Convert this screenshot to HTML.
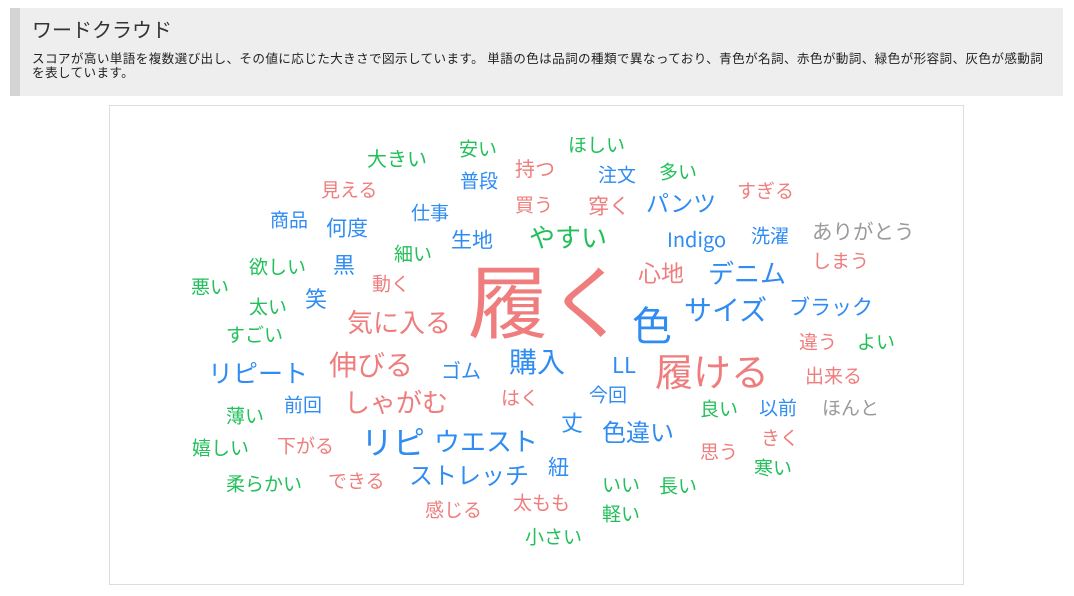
<!DOCTYPE html>
<html><head><meta charset="utf-8"><style>
body{margin:0;width:1074px;height:596px;background:#fff;font-family:"Liberation Sans","Noto Sans CJK JP",sans-serif;position:relative;overflow:hidden}
.hd{position:absolute;left:10px;top:8px;width:1053px;height:88px;background:#eee;border-left:10px solid #d4d4d4;box-sizing:border-box}
.hd h1{position:absolute;left:12px;top:9px;margin:0;font-weight:normal;font-size:20px;color:#333;line-height:24px;font-family:"Noto Sans CJK JP",sans-serif}
.hd p{position:absolute;left:12px;top:43px;margin:0;width:1030px;font-size:12.6px;line-height:14px;color:#222;font-family:"Noto Sans CJK JP",sans-serif;white-space:nowrap;letter-spacing:0.37px}
.box{position:absolute;left:109px;top:105px;width:855px;height:480px;border:1px solid #ddd;box-sizing:border-box}
.w{position:absolute;line-height:1;white-space:nowrap;transform:translateY(-50%);font-family:"Noto Sans CJK JP",sans-serif}
.r{color:#ef7d7d}.b{color:#2f8cf2}.g{color:#22c05a}.y{color:#9a9a9a}
</style></head><body>
<div class="hd"><h1>ワードクラウド</h1><p>スコアが高い単語を複数選び出し、その値に応じた大きさで図示しています。 単語の色は品詞の種類で異なっており、青色が名詞、赤色が動詞、緑色が形容詞、灰色が感動詞<br>を表しています。</p></div>
<div class="box"></div>
<span class="w g" style="left:367px;top:158px;font-size:20px">大きい</span>
<span class="w g" style="left:459px;top:148px;font-size:19px">安い</span>
<span class="w g" style="left:568px;top:144px;font-size:19px">ほしい</span>
<span class="w r" style="left:515px;top:168px;font-size:20px">持つ</span>
<span class="w b" style="left:460px;top:180px;font-size:19px">普段</span>
<span class="w b" style="left:598px;top:174px;font-size:19px">注文</span>
<span class="w g" style="left:659px;top:171px;font-size:19px">多い</span>
<span class="w r" style="left:321px;top:189px;font-size:19px">見える</span>
<span class="w r" style="left:737px;top:190px;font-size:19px">すぎる</span>
<span class="w r" style="left:515px;top:204px;font-size:19px">買う</span>
<span class="w r" style="left:588px;top:206px;font-size:21px">穿く</span>
<span class="w b" style="left:646px;top:202px;font-size:23px">パンツ</span>
<span class="w b" style="left:270px;top:219px;font-size:19px">商品</span>
<span class="w b" style="left:411px;top:212px;font-size:19px">仕事</span>
<span class="w b" style="left:326px;top:228px;font-size:21px">何度</span>
<span class="w b" style="left:751px;top:235px;font-size:19px">洗濯</span>
<span class="w y" style="left:812px;top:230px;font-size:20.5px">ありがとう</span>
<span class="w g" style="left:529px;top:237px;font-size:26px">やすい</span>
<span class="w b" style="left:667px;top:239px;font-size:20px">Indigo</span>
<span class="w b" style="left:451px;top:240px;font-size:21px">生地</span>
<span class="w g" style="left:394px;top:253px;font-size:19px">細い</span>
<span class="w g" style="left:249px;top:266px;font-size:19px">欲しい</span>
<span class="w b" style="left:333px;top:264px;font-size:22px">黒</span>
<span class="w r" style="left:638px;top:272px;font-size:23px">心地</span>
<span class="w b" style="left:708px;top:273px;font-size:26px">デニム</span>
<span class="w r" style="left:812px;top:260px;font-size:19px">しまう</span>
<span class="w g" style="left:191px;top:286px;font-size:19px">悪い</span>
<span class="w r" style="left:372px;top:283px;font-size:19px">動く</span>
<span class="w r" style="left:468px;top:298px;font-size:80px">履く</span>
<span class="w g" style="left:249px;top:306px;font-size:19px">太い</span>
<span class="w b" style="left:305px;top:298px;font-size:22px">笑</span>
<span class="w b" style="left:684px;top:309px;font-size:28px">サイズ</span>
<span class="w b" style="left:789px;top:307px;font-size:21px">ブラック</span>
<span class="w b" style="left:632px;top:323px;font-size:40px">色</span>
<span class="w r" style="left:347px;top:322px;font-size:26px">気に入る</span>
<span class="w g" style="left:226px;top:334px;font-size:19px">すごい</span>
<span class="w r" style="left:799px;top:341px;font-size:19px">違う</span>
<span class="w g" style="left:857px;top:341px;font-size:19px">よい</span>
<span class="w b" style="left:509px;top:361px;font-size:28px">購入</span>
<span class="w r" style="left:329px;top:364px;font-size:28px">伸びる</span>
<span class="w b" style="left:208px;top:373px;font-size:25px">リピート</span>
<span class="w b" style="left:441px;top:370px;font-size:20px">ゴム</span>
<span class="w b" style="left:612px;top:364px;font-size:22px">LL</span>
<span class="w r" style="left:655px;top:370px;font-size:38px">履ける</span>
<span class="w r" style="left:805px;top:375px;font-size:19px">出来る</span>
<span class="w r" style="left:501px;top:397px;font-size:19px">はく</span>
<span class="w b" style="left:589px;top:394px;font-size:19px">今回</span>
<span class="w b" style="left:284px;top:404px;font-size:19px">前回</span>
<span class="w r" style="left:344px;top:402px;font-size:26px">しゃがむ</span>
<span class="w g" style="left:700px;top:408px;font-size:19px">良い</span>
<span class="w b" style="left:759px;top:407px;font-size:19px">以前</span>
<span class="w y" style="left:822px;top:407px;font-size:19px">ほんと</span>
<span class="w g" style="left:226px;top:415px;font-size:19px">薄い</span>
<span class="w b" style="left:561px;top:422px;font-size:22px">丈</span>
<span class="w b" style="left:361px;top:441px;font-size:32px">リピ</span>
<span class="w b" style="left:434px;top:441px;font-size:26px">ウエスト</span>
<span class="w b" style="left:602px;top:431px;font-size:24px">色違い</span>
<span class="w r" style="left:761px;top:437px;font-size:19px">きく</span>
<span class="w g" style="left:192px;top:447px;font-size:19px">嬉しい</span>
<span class="w r" style="left:277px;top:445px;font-size:19px">下がる</span>
<span class="w r" style="left:700px;top:451px;font-size:19px">思う</span>
<span class="w b" style="left:548px;top:467px;font-size:21px">紐</span>
<span class="w g" style="left:754px;top:467px;font-size:19px">寒い</span>
<span class="w b" style="left:409px;top:474px;font-size:24px">ストレッチ</span>
<span class="w g" style="left:226px;top:483px;font-size:19px">柔らかい</span>
<span class="w r" style="left:328px;top:480px;font-size:19px">できる</span>
<span class="w g" style="left:602px;top:484px;font-size:19px">いい</span>
<span class="w g" style="left:659px;top:485px;font-size:19px">長い</span>
<span class="w r" style="left:513px;top:502px;font-size:19px">太もも</span>
<span class="w r" style="left:425px;top:509px;font-size:19px">感じる</span>
<span class="w g" style="left:602px;top:513px;font-size:19px">軽い</span>
<span class="w g" style="left:525px;top:536px;font-size:19px">小さい</span>
</body></html>
